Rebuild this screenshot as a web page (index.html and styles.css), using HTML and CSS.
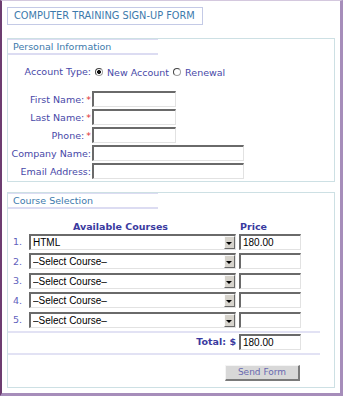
FILE: index.html
```html
<!DOCTYPE html>
<html lang="en">
<head>
    <meta charset="UTF-8">
    <title>Computer Training Sign-Up Form</title>
    <link rel="stylesheet" href="styles.css">
</head>
<body>
    <div class="page">
        <div class="title">Computer Training Sign-Up Form</div>

        <div class="section personal">
            <div class="legend">Personal Information</div>
            <div class="fields">
                <span class="label account">Account Type:</span>
                <div class="radios">
                    <label><input type="radio" name="acct" checked> New Account</label>
                    <label><input type="radio" name="acct"> Renewal</label>
                </div>

                <span class="label">First Name:<em>*</em></span>
                <input type="text" class="short">
                <span class="label">Last Name:<em>*</em></span>
                <input type="text" class="short">
                <span class="label">Phone:<em>*</em></span>
                <input type="text" class="short">
                <span class="label">Company Name:</span>
                <input type="text" class="long">
                <span class="label">Email Address:</span>
                <input type="text" class="long">
            </div>
        </div>

        <div class="section courses">
            <div class="legend">Course Selection</div>
            <div class="course-grid">
                <span class="head head-course">Available Courses</span>
                <span class="head head-price">Price</span>

                <span class="num">1.</span>
                <div class="pick"><select><option>HTML</option></select></div>
                <input type="text" class="price" value="180.00">

                <span class="num">2.</span>
                <div class="pick"><select><option>&ndash;Select Course&ndash;</option></select></div>
                <input type="text" class="price">

                <span class="num">3.</span>
                <div class="pick"><select><option>&ndash;Select Course&ndash;</option></select></div>
                <input type="text" class="price">

                <span class="num">4.</span>
                <div class="pick"><select><option>&ndash;Select Course&ndash;</option></select></div>
                <input type="text" class="price">

                <span class="num">5.</span>
                <div class="pick"><select><option>&ndash;Select Course&ndash;</option></select></div>
                <input type="text" class="price">
            </div>

            <div class="total-row">
                <span class="total-label">Total: $</span>
                <input type="text" class="price" value="180.00">
            </div>

            <div class="actions">
                <button type="button">Send Form</button>
            </div>
        </div>
    </div>
</body>
</html>
```

FILE: styles.css
```css
body {
    margin: 0;
    font-family: 'DejaVu Sans', Verdana, sans-serif;
    font-size: 9.5px;
    background: #fff;
}

.page {
    box-sizing: border-box;
    width: 343px;
    height: 396px;
    border-top: 1px solid #d4c8de;
    border-left: 2px solid #6d3d70;
    border-right: 3px solid #a68dba;
    border-bottom: 3px solid #a68dba;
    padding: 6px 6px 0 5px;
}

.title {
    display: inline-block;
    box-sizing: border-box;
    width: 196px;
    height: 18px;
    line-height: 16px;
    padding-left: 6px;
    border: 1px solid #c4cae6;
    color: #3d7aac;
    font-size: 9.8px;
    text-transform: uppercase;
}

.section {
    width: 326px;
    border: 1px solid #cde0e4;
}

.personal {
    margin-top: 13px;
    padding-bottom: 2px;
}

.courses {
    margin-top: 10px;
    padding-bottom: 6px;
}

.legend {
    box-sizing: border-box;
    width: 150px;
    height: 16px;
    line-height: 13px;
    padding-left: 5px;
    border-top: 1px solid #dcdcf2;
    border-bottom: 2px solid #dcdcf2;
    color: #3d7aac;
}

/* personal fields */

.fields {
    display: grid;
    grid-template-columns: 83px 1fr;
    column-gap: 1px;
    row-gap: 2px;
    align-items: center;
    margin-top: 9px;
}

.label {
    text-align: right;
    color: #4848a8;
    white-space: nowrap;
}

.label.account {
    align-self: start;
    line-height: 16px;
}

.label em {
    color: #e03030;
    font-style: normal;
    margin-left: 2px;
}

.radios {
    display: flex;
    align-items: center;
    height: 16px;
    margin-bottom: 9px;
    color: #4848a8;
}

.radios label {
    display: flex;
    align-items: center;
    margin-left: 3px;
}

.radios label + label {
    margin-left: 4px;
}

input[type="radio"] {
    appearance: none;
    box-sizing: border-box;
    width: 8px;
    height: 8px;
    margin: 0 4px 0 0;
    border-radius: 50%;
    border: 1px solid #a0a0a0;
    border-top-color: #444;
    border-left-color: #444;
    background: #fff;
}

input[type="radio"]:checked {
    background: radial-gradient(circle, #111 0 1.8px, #fff 2.2px);
}

input[type="text"] {
    box-sizing: border-box;
    height: 16px;
    margin: 0;
    padding: 0 2px;
    border-style: solid;
    border-width: 2px 1px 1px 2px;
    border-color: #6a6a6a #e2e2e2 #e2e2e2 #6a6a6a;
    background: #fff;
    font-family: 'Liberation Sans', Arial, sans-serif;
    font-size: 10px;
    color: #000;
}

.short {
    width: 84px;
}

.long {
    width: 152px;
}

/* courses */

.course-grid {
    display: grid;
    grid-template-columns: 21px 207px 62px;
    row-gap: 3.5px;
    align-items: center;
    margin-top: 12px;
}

.head {
    font-weight: bold;
    color: #3a3aa0;
    line-height: 12px;
    margin-bottom: -3px;
}

.head-course {
    grid-column: 1 / 3;
    text-align: center;
    padding-right: 3px;
}

.head-price {
    padding-left: 4px;
}

.num {
    padding-left: 5px;
    color: #6060bc;
}

.pick {
    position: relative;
    height: 16px;
}

.pick select {
    appearance: none;
    box-sizing: border-box;
    width: 207px;
    height: 16px;
    margin: 0;
    padding: 0 0 0 2px;
    border-style: solid;
    border-width: 2px 1px 1px 2px;
    border-color: #6a6a6a #e2e2e2 #e2e2e2 #6a6a6a;
    border-radius: 0;
    background: #fff;
    font-family: 'Liberation Sans', Arial, sans-serif;
    font-size: 10px;
    color: #000;
}

/* drop-down button drawn over the select */
.pick::after {
    content: "";
    position: absolute;
    top: 2px;
    right: 1px;
    box-sizing: border-box;
    width: 11px;
    height: 13px;
    border-style: solid;
    border-width: 1px;
    border-color: #fafafa #6a6a6a #6a6a6a #fafafa;
    background: #d6d3cc;
}

.pick::before {
    content: "";
    position: absolute;
    z-index: 1;
    top: 8px;
    right: 4px;
    width: 0;
    height: 0;
    border-left: 3px solid transparent;
    border-right: 3px solid transparent;
    border-top: 3px solid #000;
}

.price {
    width: 62px;
    margin-left: 3px !important;
}

.total-row {
    display: flex;
    align-items: center;
    width: 312px;
    height: 16px;
    padding: 1px 0 3px;
    margin-top: 3px;
    border-top: 2px solid #e2e2f4;
    border-bottom: 2px solid #e2e2f4;
}

.total-label {
    width: 228px;
    text-align: right;
    font-weight: bold;
    color: #3a3aa0;
}

.actions {
    padding: 10px 0 0 217px;
}

button {
    box-sizing: border-box;
    width: 75px;
    height: 16px;
    padding: 0;
    border-style: solid;
    border-width: 1px 2px 2px 1px;
    border-color: #f4f4f4 #7a7a7a #7a7a7a #f4f4f4;
    background: #d8d8d8;
    color: #6868b0;
    font-family: 'DejaVu Sans', Verdana, sans-serif;
    font-size: 9px;
}
```
